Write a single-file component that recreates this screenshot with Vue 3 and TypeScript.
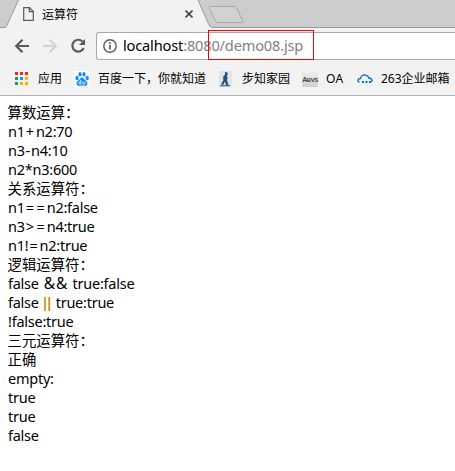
<script setup lang="ts">
interface Line {
  text: string
  cjk?: boolean
}
interface Token {
  text: string
  kind: string
}

const lines: Line[] = [
  { text: '算数运算：', cjk: true },
  { text: 'n1+n2:70' },
  { text: 'n3-n4:10' },
  { text: 'n2*n3:600' },
  { text: '关系运算符：', cjk: true },
  { text: 'n1==n2:false' },
  { text: 'n3>=n4:true' },
  { text: 'n1!=n2:true' },
  { text: '逻辑运算符：', cjk: true },
  { text: 'false && true:false' },
  { text: 'false || true:true' },
  { text: '!false:true' },
  { text: '三元运算符：', cjk: true },
  { text: '正确', cjk: true },
  { text: 'empty:' },
  { text: 'true' },
  { text: 'true' },
  { text: 'false' },
]

function kindOf(text: string): string {
  if (/^[+=>]+$/.test(text)) return 'op'
  if (text === '-') return 'minus'
  if (text === '&&') return 'and'
  if (text === '||') return 'bars'
  return 'plain'
}

// Operators are spaced differently from the words around them.
function tokens(text: string): Token[] {
  return text
    .split(/([+=>]+|-|&&|\|\|)/)
    .filter((part) => part.length > 0)
    .map((part) => ({ text: part, kind: kindOf(part) }))
}

const rows = lines.map((line) => ({ cjk: line.cjk, parts: tokens(line.text) }))

const appColors = ['#f22613', '#f22613', '#f22613', '#12a15e', '#1a8cff', '#ffae00', '#12a15e', '#ffae00', '#ffae00']
</script>

<template>
  <div class="browser">
    <header class="tabs">
      <svg class="tab-shape" width="455" height="28" viewBox="0 0 455 28">
        <path d="M0 27.5H5Q6.5 27 7.5 24L18.500 0H198L208.500 24Q210 27.500 213 27.500H455V28H0Z" fill="#f2f2f2" />
        <path d="M0 27.5H5Q6.5 27 7.500 24L18.500 0M198 0L208.500 24Q210 27.500 213 27.500H455" fill="none" stroke="#999" />
        <path d="M210.500 6.500H234Q236 6.500 237 9L242.500 20.500Q243 22.500 241 22.500H218Q216 22.500 215 20L209.500 8.500Q209 6.500 210.500 6.500Z" fill="#d2d2d2" stroke="#a6a6a6" />
      </svg>
      <svg class="page-icon" width="11" height="14" viewBox="0 0 11 14" fill="none" stroke="#5a5a5a" stroke-width="1.2">
        <path d="M.7.7H6.500L10.300 4.500V13.300H.7ZM6.300.7V4.700H10.300" />
      </svg>
      <span class="title">运算符</span>
      <svg class="close" width="8" height="8" viewBox="0 0 8 8" stroke="#444" stroke-width="1.6"><path d="M.5.5 7.500 7.500M7.500.5.5 7.500" /></svg>
    </header>
    <div class="toolbar">
      <svg class="nav" width="96" height="28" viewBox="0 0 96 28" fill="none" stroke-width="2.200">
        <path d="M29 14H16.500M22.500 7.700 16.200 14 22.500 20.300" stroke="#5a5a5a" />
        <path d="M43 14H55.500M49.500 7.700 55.800 14 49.500 20.300" stroke="#d2d2d2" />
        <path d="M82.500 9.500A5.900 5.900 0 1 0 83.700 16" stroke="#5a5a5a" />
        <path d="M85 7V13H79Z" fill="#5a5a5a" />
      </svg>
      <div class="omnibox">
        <svg width="14" height="14" viewBox="0 0 14 14" fill="none" stroke="#5a5a5a" stroke-width="1.4">
          <circle cx="7" cy="7" r="6.200" /><path d="M7 6V10.500M7 3.300V4.900" stroke-width="1.7" />
        </svg>
        <span class="url">localhost<span class="path">:8080/demo08.jsp</span></span>
      </div>
      <div class="highlight"></div>
    </div>
    <nav class="bookmarks">
      <svg class="apps" width="13" height="13" viewBox="0 0 13 13" shape-rendering="crispEdges">
        <rect v-for="(c, i) in appColors" :key="i" :x="(i % 3) * 5" :y="Math.floor(i / 3) * 5" width="3" height="3" :fill="c" />
      </svg>
      <span class="mark m-apps">应用</span>
      <svg class="baidu" width="16" height="16" viewBox="0 0 16 16">
        <rect width="16" height="16" fill="#fff" />
        <g fill="#168cff">
          <ellipse cx="3" cy="7" rx="1.700" ry="2.200" /><ellipse cx="6" cy="3.200" rx="1.600" ry="2.300" />
          <ellipse cx="10" cy="3.200" rx="1.600" ry="2.300" /><ellipse cx="13.200" cy="7" rx="1.700" ry="2.200" />
          <path d="M8 6.500C9.800 6.500 10.200 8.500 11.800 9.600C14.500 11.500 13.800 15 11 15C9.500 15 9 14.600 8 14.600S6.500 15 5 15C2.200 15 1.500 11.500 4.200 9.600C5.800 8.500 6.200 6.500 8 6.500Z" />
        </g>
        <path d="M6.800 9V13H5.500A1.200 1.200 0 0 1 5.500 10.700H6.800M8.700 10.500V12.500Q8.700 13.100 9.500 13.100H10.800V10.500" fill="none" stroke="#fff" stroke-width=".8" />
      </svg>
      <span class="mark m-baidu">百度一下，你就知道</span>
      <svg class="walker" width="13" height="16" viewBox="0 0 13 16">
        <rect width="13" height="16" fill="#dce5ea" />
        <path d="M6 1Q8.500.5 8.800 2.800L8 4.700 8.600 7 8 9 9.500 14.500H7.200L6 10.500 4.300 13.800H2.500V12.500L4.500 9 4 7 4.800 4.500 6 4Z" fill="#235173" /><path d="M1 14.800H11" stroke="#235173" />
      </svg>
      <span class="mark m-home">步知家园</span>
      <span class="abvs">A<span class="small">BVS</span></span>
      <span class="mark m-oa">OA</span>
      <svg class="cloud" width="16" height="10" viewBox="0 0 16 10" fill="none" stroke="#0873c4">
        <path d="M2.500 8.300C0 7.300.8 4.300 3.500 4.500C3.700 1.700 6.500.4 9 1.200C10.800 1.700 11.600 3 12 4.200C14.500 4 15.500 6 14.500 8" stroke-width="1.400" />
        <path d="M5 8H7M8.500 8H10.500M12 8H14" stroke-width="2" />
      </svg>
      <span class="mark m-mail">263企业邮箱</span>
    </nav>
    <main class="content">
      <div v-for="(row, i) in rows" :key="i" class="line" :class="{ cjk: row.cjk }"><span v-for="(part, j) in row.parts" :key="j" :class="part.kind">{{ part.text }}</span></div>
    </main>
  </div>
</template>

<style>
body { background: #fff; overflow: hidden; }
</style>
<style scoped>
.browser { width: 455px; height: 471px; overflow: hidden; background: #fff; color: #000; font-family: "Noto Sans", "Noto Sans CJK SC", sans-serif; }
.browser svg { display: block; flex: none; }
.tabs { height: 28px; position: relative; display: flex; background: #ccc; }
.tab-shape { position: absolute; left: 0; top: 0; }
.page-icon { position: relative; margin: 7px 0 0 23px; }
.title { position: relative; margin: 4px 0 0 8px; width: 142px; font: 12px/19px "Noto Sans CJK SC", sans-serif; }
.close { position: relative; margin-top: 10px; margin-left: 1px; }
.toolbar { height: 34px; padding-top: 4px; box-sizing: border-box; position: relative; display: flex; background: #f2f2f2; }
.omnibox { box-sizing: border-box; flex: 1; height: 28px; border: 1px solid #a9a9a9; border-right: 0; border-radius: 3px 0 0 3px; background: #fff; display: flex; align-items: center; padding-left: 6px; }
.url { margin-left: 6px; font-size: 14.600px; letter-spacing: -0.17px; line-height: 24px; padding-bottom: 2px; white-space: nowrap; }
.path { color: #808080; }
.highlight { position: absolute; left: 208px; top: 2px; width: 106px; height: 30px; box-sizing: border-box; border: 1px solid #f00; }
.bookmarks { height: 34px; box-sizing: border-box; border-bottom: 1px solid #b2b2b2; background: #f2f2f2; display: flex; align-items: center; padding-left: 15px; }
.mark { font: 12px/18px "Noto Sans", "Noto Sans CJK SC", sans-serif; white-space: nowrap; flex: none; }
.m-apps { margin-left: 10px; width: 36px; }
.m-baidu { margin-left: 8px; width: 121px; }
.m-home { margin-left: 10px; width: 60px; margin-right: 12px; }
.m-oa { margin-left: 8px; width: 31px; letter-spacing: .4px; }
.m-mail { margin-left: 8px; }
.m-home { margin-right: 0; }
.abvs { flex: none; width: 16px; height: 16px; background: linear-gradient(#f0f0f0, #cfcfcf); color: #444; font: bold 7px/18px "Liberation Sans", sans-serif; letter-spacing: -0.500px; text-align: center; }
.small { font-size: 6px; }
.content { padding: 7px 0 0 8px; }
.line { height: 19px; font-size: 14.500px; line-height: 19px; letter-spacing: -0.25px; white-space: pre; }
.cjk { font: 14.400px/17px "Noto Sans CJK SC", sans-serif; letter-spacing: 0; margin-left: -0.500px; }
.op { letter-spacing: 2.500px; margin-left: 1px; margin-right: -0.700px; }
.minus { letter-spacing: 0; margin: 0 .8px; }
.and { font-size: 15.500px; line-height: 1; letter-spacing: .8px; margin: 0 1px 0 1.500px; }
.bars { color: #c08a10; font-weight: 700; letter-spacing: -3.600px; margin: 0 2.400px 0 -1.300px; }
</style>
